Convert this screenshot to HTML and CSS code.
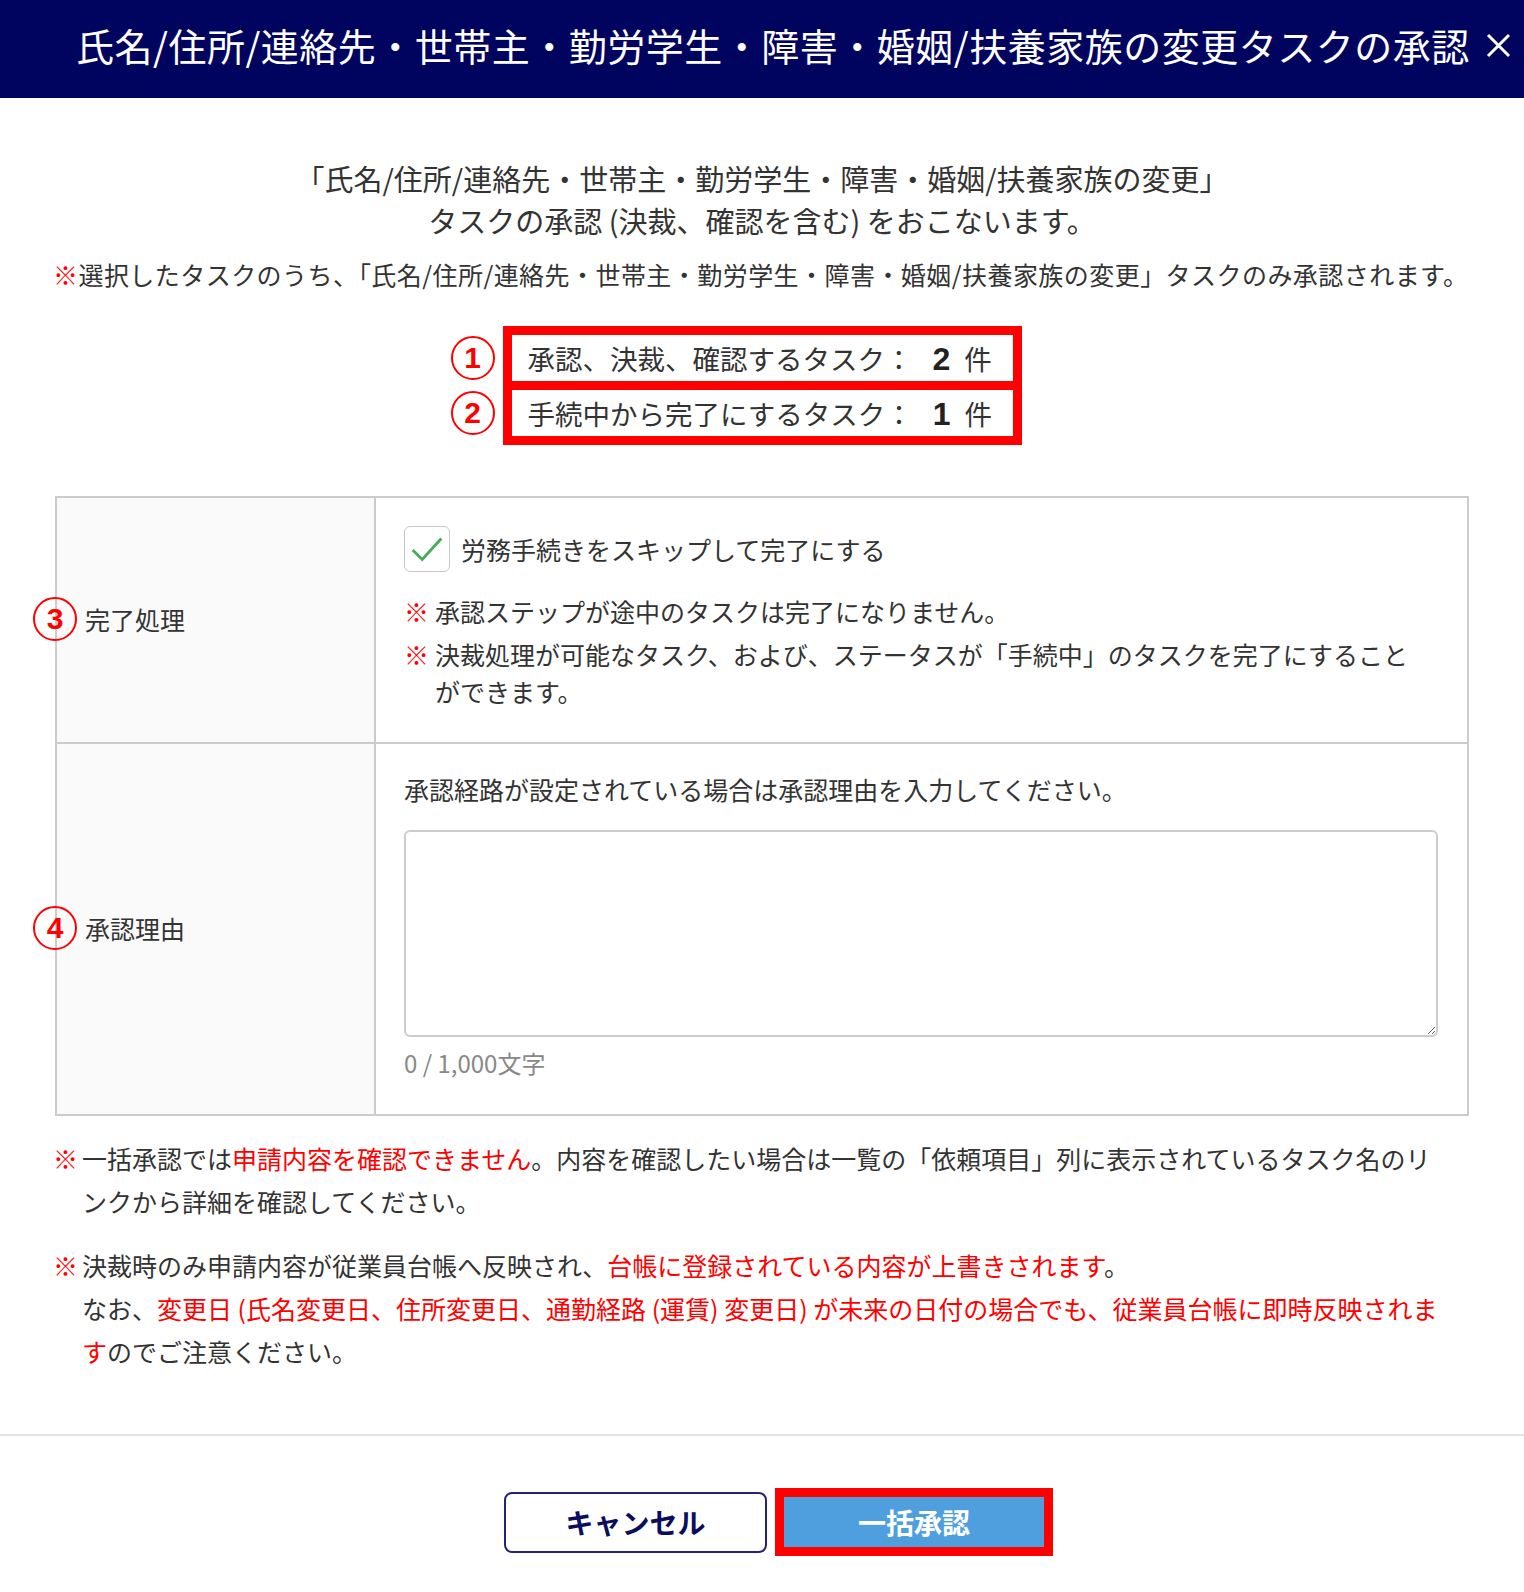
FILE: index.html
```html
<!DOCTYPE html>
<html lang="ja">
<head>
  <meta charset="UTF-8" />
  <meta name="viewport" content="width=device-width, initial-scale=1" />
  <title>タスクの承認</title>
  <link rel="stylesheet" href="styles.css">
</head>
<body>
  <header class="modal-header">
    <h1 class="modal-title">氏名/住所/連絡先・世帯主・勤労学生・障害・婚姻/扶養家族の変更タスクの承認</h1>
    <button class="close-btn" type="button" aria-label="閉じる">
      <svg width="25" height="25" viewBox="0 0 25 25"><path d="M2 2 L23 23 M23 2 L2 23" stroke="#fff" stroke-width="3" fill="none"/></svg>
    </button>
  </header>

  <main class="modal-body">
    <p class="lead">「氏名/住所/連絡先・世帯主・勤労学生・障害・婚姻/扶養家族の変更」<br>タスクの承認 (決裁、確認を含む) をおこないます。</p>
    <p class="caution"><span class="mark">※</span>選択したタスクのうち、「氏名/住所/連絡先・世帯主・勤労学生・障害・婚姻/扶養家族の変更」タスクのみ承認されます。</p>

    <div class="count-box">
      <div class="count-row"><span class="badge">1</span>承認、決裁、確認するタスク：<b>2</b>件</div>
      <div class="count-row"><span class="badge">2</span>手続中から完了にするタスク：<b>1</b>件</div>
    </div>

    <div class="form-table">
      <div class="form-row">
        <div class="form-label"><span class="label-text"><span class="badge">3</span>完了処理</span></div>
        <div class="form-field form-field-complete">
          <label class="check-row">
            <span class="checkbox">
              <svg width="46" height="46" viewBox="0 0 46 46"><polyline points="8,24 18,34 38,12" stroke="#45ad5a" stroke-width="3" fill="none"/></svg>
            </span>
            労務手続きをスキップして完了にする
          </label>
          <div class="field-notes">
            <div class="field-note"><span class="mark">※</span><span>承認ステップが途中のタスクは完了になりません。</span></div>
            <div class="field-note"><span class="mark">※</span><span>決裁処理が可能なタスク、および、ステータスが「手続中」のタスクを完了にすること<br>ができます。</span></div>
          </div>
        </div>
      </div>
      <div class="form-row">
        <div class="form-label"><span class="label-text"><span class="badge">4</span>承認理由</span></div>
        <div class="form-field form-field-reason">
          <div>承認経路が設定されている場合は承認理由を入力してください。</div>
          <textarea class="reason-input"></textarea>
          <div class="counter">0 / 1,000文字</div>
        </div>
      </div>
    </div>

    <div class="notes">
      <div class="note">
        <span class="mark">※</span>
        <span>一括承認では<span class="red">申請内容を確認できません</span>。内容を確認したい場合は一覧の「依頼項目」列に表示されているタスク名のリ<br>ンクから詳細を確認してください。</span>
      </div>
      <div class="note">
        <span class="mark">※</span>
        <span>決裁時のみ申請内容が従業員台帳へ反映され、<span class="red">台帳に登録されている内容が上書きされます</span>。<br>なお、<span class="red">変更日 (氏名変更日、住所変更日、通勤経路 (運賃) 変更日) が未来の日付の場合でも、従業員台帳に即時反映されま<br>す</span>のでご注意ください。</span>
      </div>
    </div>
  </main>

  <footer class="modal-footer">
    <button class="btn-cancel" type="button">キャンセル</button>
    <span class="highlight"><button class="btn-approve" type="button">一括承認</button></span>
  </footer>
</body>
</html>
```

FILE: styles.css
```css
body {
  margin: 0;
  background: #fff;
  color: #333;
  font-family: "Noto Sans CJK JP", "Noto Sans", sans-serif;
}
.modal-header {
  height: 98px;
  box-sizing: border-box;
  padding: 20px 13px 0 76px;
  background: #01045f;
  display: flex;
  align-items: flex-start;
}
.modal-title {
  margin: 0;
  color: #fff;
  font-size: 38px;
  font-weight: 400;
  line-height: 50px;
  letter-spacing: 0.5px;
  white-space: nowrap;
}
.close-btn {
  margin: 13px 0 0 auto;
  padding: 0;
  width: 25px;
  height: 25px;
  border: none;
  background: none;
}
.modal-body {
  padding: 59px 55px 0;
}
.lead {
  margin: 0;
  text-align: center;
  font-size: 29px;
  line-height: 42px;
}
.caution {
  margin: 15px 0 0 -2px;
  font-size: 25px;
  line-height: 37px;
  letter-spacing: 0.45px;
}
.mark,
.red {
  color: #f00;
}
.count-box {
  width: 519px;
  box-sizing: border-box;
  margin: 33px auto 0;
  padding: 9px;
  background: #f00;
  display: flex;
  flex-direction: column;
  gap: 9px;
}
.count-row {
  position: relative;
  height: 46px;
  line-height: 46px;
  padding-left: 16px;
  background: #fff;
  font-size: 27.5px;
  white-space: nowrap;
}
.count-row b {
  margin: 0 14px 0 20px;
  font-family: "Liberation Sans", sans-serif;
  font-size: 32px;
  color: #222;
}
.badge {
  position: absolute;
  top: 50%;
  transform: translateY(-50%);
  width: 44px;
  height: 44px;
  box-sizing: border-box;
  border: 2px solid #f00;
  border-radius: 50%;
  color: #f00;
  font: bold 30px/40px "Liberation Sans", sans-serif;
  text-align: center;
}
.count-row .badge {
  left: -61px;
}
.form-table {
  margin-top: 51px;
  border: 2px solid #ccc;
}
.form-row {
  display: grid;
  grid-template-columns: 319px 1fr;
}
.form-row + .form-row {
  border-top: 2px solid #ccc;
}
.form-label {
  display: flex;
  align-items: center;
  padding-left: 28px;
  background: #fafafa;
  border-right: 2px solid #ccc;
  font-size: 25px;
}
.label-text {
  position: relative;
  top: -1px;
}
.label-text .badge {
  left: -52px;
}
.form-field {
  padding: 28px 29px 29px 28px;
  font-size: 25px;
  line-height: 37px;
}
.form-field-complete {
  padding-bottom: 32px;
}
.check-row {
  display: flex;
  align-items: center;
  gap: 11px;
  height: 46px;
}
.checkbox {
  width: 46px;
  height: 46px;
  box-sizing: border-box;
  border: 1.5px solid #c8c8c8;
  border-radius: 6px;
  background: #fff;
  display: flex;
  align-items: center;
  justify-content: center;
}
.field-notes {
  margin-top: 21px;
}
.field-note {
  display: flex;
}
.field-note + .field-note {
  margin-top: 6px;
}
.field-note .mark {
  flex: 0 0 31px;
}
.form-field-reason {
  padding-top: 27px;
  padding-bottom: 33px;
}
.reason-input {
  display: block;
  width: 100%;
  height: 207px;
  box-sizing: border-box;
  margin-top: 22px;
  border: 2px solid #ccc;
  border-radius: 6px;
  font-size: 25px;
}
.counter {
  margin-top: 7px;
  color: #888;
  font-size: 24px;
}
.notes {
  margin-top: 21px;
  font-size: 25px;
  line-height: 43px;
}
.note {
  display: flex;
  margin-left: -2px;
}
.note + .note {
  margin-top: 21px;
}
.note .mark {
  flex: 0 0 29px;
}
.modal-footer {
  margin-top: 61px;
  padding: 52px 0 0 33px;
  border-top: 2px solid #e3e3e3;
  display: flex;
  justify-content: center;
  align-items: center;
  gap: 8px;
}
.btn-cancel {
  width: 263px;
  height: 61px;
  border: 2px solid #23237a;
  border-radius: 8px;
  background: #fff;
  color: #0d0d5e;
  font-family: "Noto Sans CJK JP", sans-serif;
  font-size: 28px;
  font-weight: bold;
}
.highlight {
  display: inline-block;
  border: 9px solid #f00;
}
.btn-approve {
  display: block;
  width: 260px;
  height: 50px;
  border: none;
  background: #4f9fdf;
  color: #fff;
  font-family: "Noto Sans CJK JP", sans-serif;
  font-size: 28px;
  font-weight: bold;
}
```
